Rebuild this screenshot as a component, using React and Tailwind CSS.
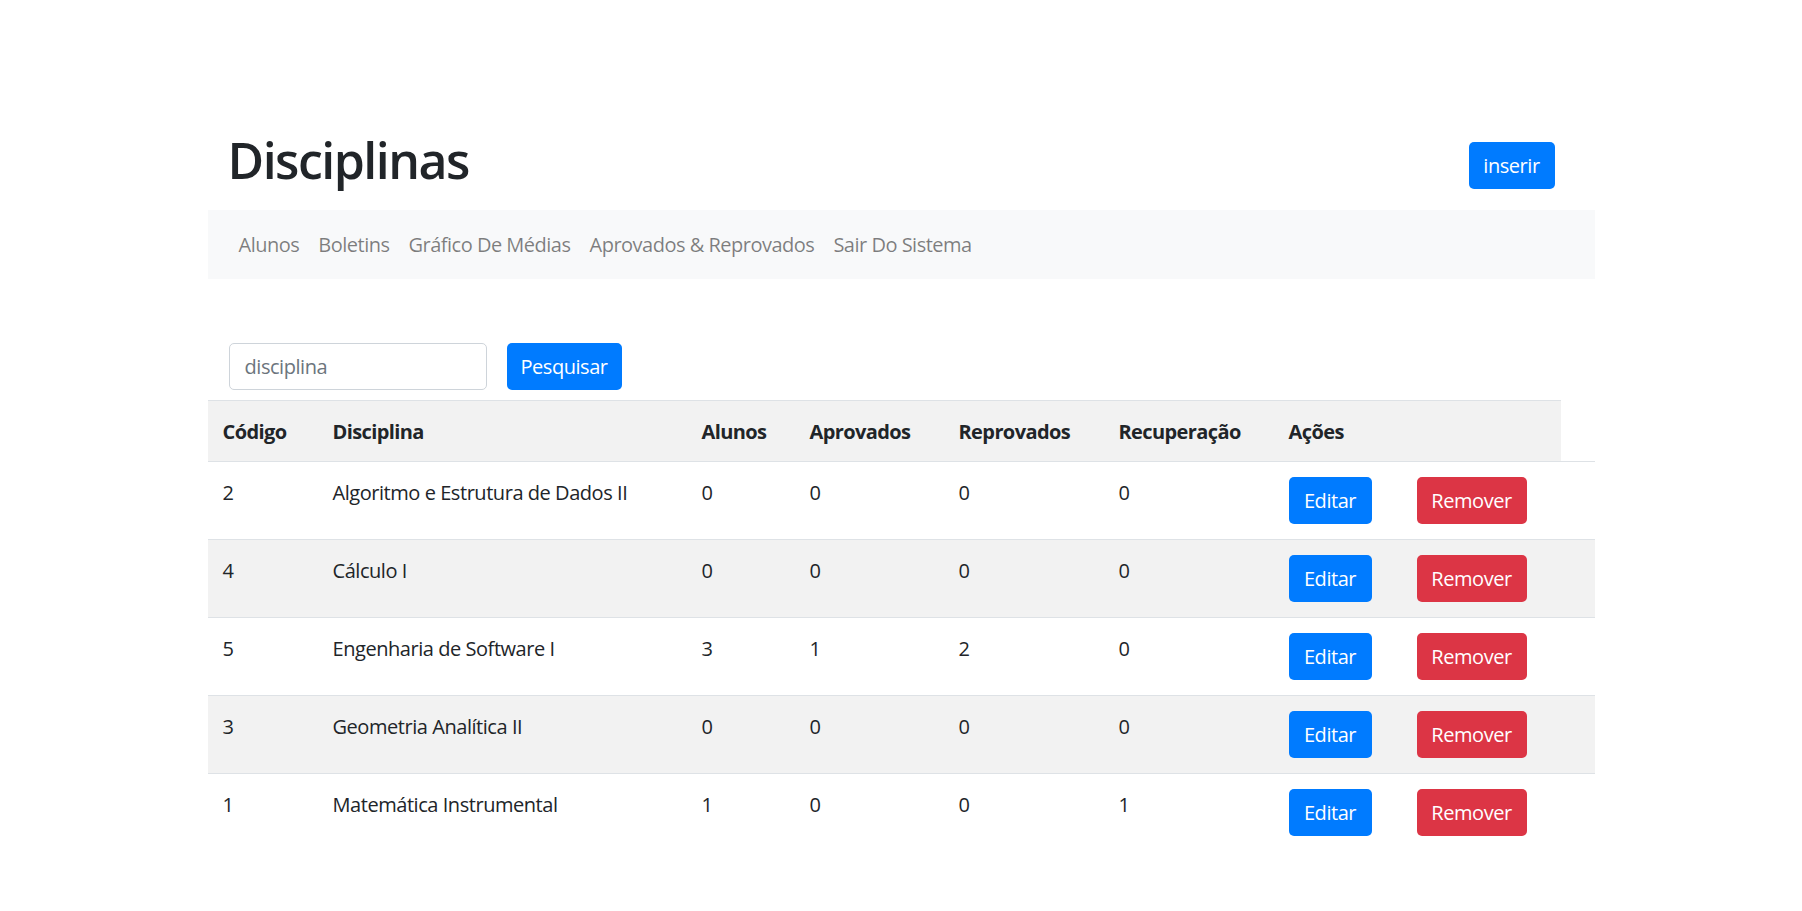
const rows = [
  { codigo: 2, nome: "Algoritmo e Estrutura de Dados II", alunos: 0, aprovados: 0, reprovados: 0, recuperacao: 0 },
  { codigo: 4, nome: "Cálculo I", alunos: 0, aprovados: 0, reprovados: 0, recuperacao: 0 },
  { codigo: 5, nome: "Engenharia de Software I", alunos: 3, aprovados: 1, reprovados: 2, recuperacao: 0 },
  { codigo: 3, nome: "Geometria Analítica II", alunos: 0, aprovados: 0, reprovados: 0, recuperacao: 0 },
  { codigo: 1, nome: "Matemática Instrumental", alunos: 1, aprovados: 0, reprovados: 0, recuperacao: 1 },
];

const navLinks = ["Alunos", "Boletins", "Gráfico De Médias", "Aprovados & Reprovados", "Sair Do Sistema"];

const cols = "grid grid-cols-[110px_369px_108px_149px_160px_170px_128px_1fr]";

export default function App() {
  return (
    <div className="min-h-[911px] bg-white text-[#212529] tracking-[-0.45px] font-['Open_Sans',_'Noto_Sans',_sans-serif]">
      <div className="w-[1387px] mx-auto pt-[130px]">
        {/* Title */}
        <div className="flex items-end justify-between">
          <h1 className="ml-[20px] text-[50px] leading-[60px] font-semibold tracking-[-1.5px]">Disciplinas</h1>
          <button className="mr-[40px] mb-[1px] w-[86px] h-[47px] rounded-[5px] bg-[#007bff] text-white text-[20px]">
            inserir
          </button>
        </div>

        {/* Navbar */}
        <nav className="mt-[20px] h-[69px] bg-[#f8f9fa] flex items-center pl-[31px] gap-[19px] text-[20px] text-black/50 tracking-[-0.5px]">
          {navLinks.map((l) => (
            <a key={l} className="cursor-pointer">{l}</a>
          ))}
        </nav>

        {/* Search */}
        <div className="mt-[64px] ml-[21px] flex items-center gap-[20px]">
          <input
            placeholder="disciplina"
            className="w-[258px] h-[47px] px-[15px] border border-[#ced4da] rounded-[5px] text-[20px] placeholder:text-[#6c757d] outline-none"
          />
          <button className="w-[115px] h-[47px] rounded-[5px] bg-[#007bff] text-white text-[20px]">Pesquisar</button>
        </div>

        {/* Table */}
        <div className="mt-[10px] text-[20px] leading-[30px]">
          <div className={`${cols} w-[1353px] bg-[#f2f2f2] border-t border-[#dee2e6] font-bold tracking-[-0.6px]`}>
            {["Código", "Disciplina", "Alunos", "Aprovados", "Reprovados", "Recuperação", "Ações", ""].map((h, i) => (
              <div key={i} className="pt-[16px] pb-[14px] pl-[15px]">{h}</div>
            ))}
          </div>
          {rows.map((r, i) => (
            <div
              key={r.codigo}
              className={`${cols} border-t border-[#dee2e6] ${i % 2 === 1 ? "bg-[#f2f2f2]" : ""}`}
            >
              <div className="pt-[16px] pl-[15px]">{r.codigo}</div>
              <div className="pt-[16px] pl-[15px]">{r.nome}</div>
              <div className="pt-[16px] pl-[15px]">{r.alunos}</div>
              <div className="pt-[16px] pl-[15px]">{r.aprovados}</div>
              <div className="pt-[16px] pl-[15px]">{r.reprovados}</div>
              <div className="pt-[16px] pl-[15px]">{r.recuperacao}</div>
              <div className="py-[15px] pl-[15px]">
                <button className="w-[83px] h-[47px] rounded-[5px] bg-[#007bff] text-white">Editar</button>
              </div>
              <div className="py-[15px] pl-[15px]">
                <button className="w-[110px] h-[47px] rounded-[5px] bg-[#dc3545] text-white">Remover</button>
              </div>
            </div>
          ))}
        </div>
      </div>
    </div>
  );
}
